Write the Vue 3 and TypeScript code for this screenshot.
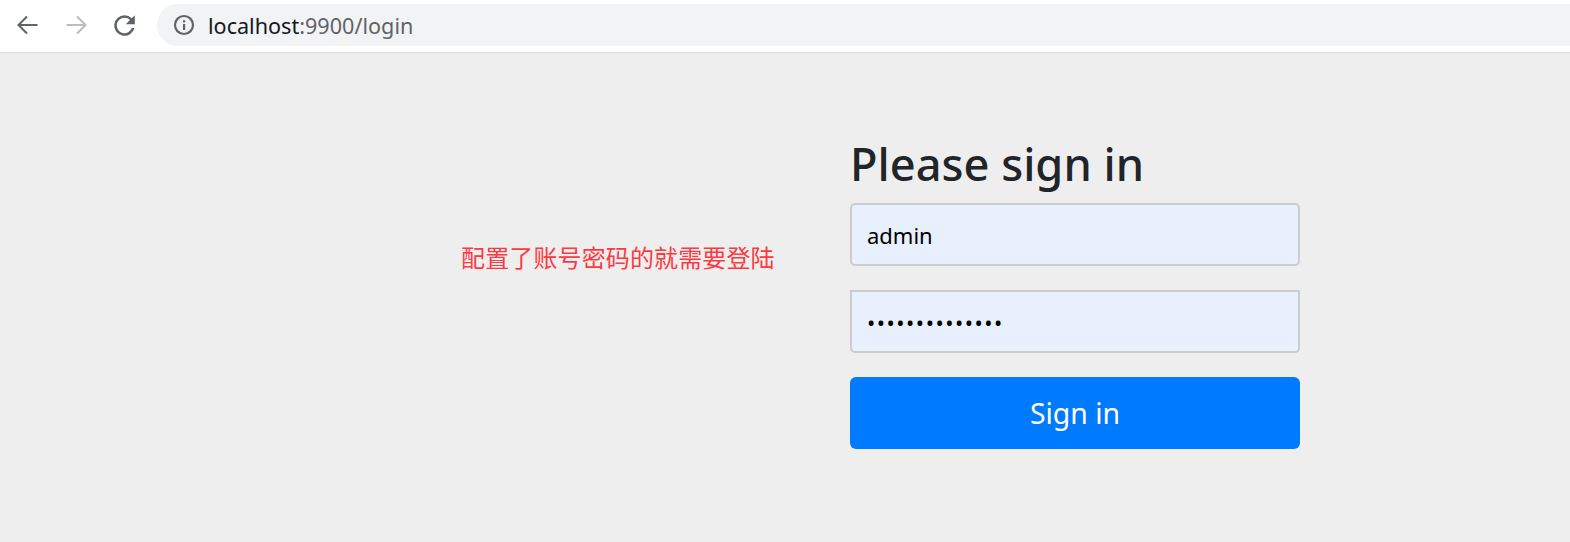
<script setup lang="ts">
const host = 'localhost'
const rest = ':9900/login'
const username = 'admin'
const password = 'admin123456789'
</script>

<template>
  <div class="browser">
    <header class="toolbar">
      <button class="nav">
        <svg width="24" height="24" viewBox="0 0 24 24"><path d="M21.5 12H3M11 3.5 2.5 12l8.5 8.5" fill="none" stroke="#5f6368" stroke-width="2" /></svg>
      </button>
      <button class="nav">
        <svg width="24" height="24" viewBox="0 0 24 24"><path d="M2.5 12H21M13 3.5l8.5 8.5-8.5 8.5" fill="none" stroke="#babcbe" stroke-width="2" /></svg>
      </button>
      <button class="nav reload">
        <svg width="31" height="31" viewBox="0 0 24 24"><path d="M17.65 6.35A7.96 7.96 0 0 0 12 4a8 8 0 1 0 7.73 10h-2.08A6 6 0 1 1 12 6c1.66 0 3.14.69 4.22 1.78L13 11h7V4z" fill="#5f6368" /></svg>
      </button>
      <div class="omnibox">
        <svg class="info" width="22" height="22" viewBox="0 0 22 22">
          <circle cx="11" cy="11" r="9" fill="none" stroke="#5f6368" stroke-width="2.2" />
          <rect x="10" y="10" width="2.2" height="6" fill="#5f6368" />
          <rect x="10" y="6.2" width="2.2" height="2.2" fill="#5f6368" />
        </svg>
        <span class="url"><span class="host">{{ host }}</span>{{ rest }}</span>
      </div>
    </header>

    <main class="page">
      <p class="note">配置了账号密码的就需要登陆</p>
      <form class="signin" @submit.prevent>
        <h1>Please sign in</h1>
        <input class="field first" type="text" :value="username" />
        <input class="field second" type="password" :value="password" />
        <button class="submit" type="submit">Sign in</button>
      </form>
    </main>
  </div>
</template>

<style>
html,
body {
  margin: 0;
  background: #eee;
}
</style>

<style scoped>
.browser {
  width: 1570px;
  height: 542px;
  overflow: hidden;
  font-family: "Noto Sans", "Noto Sans CJK SC", sans-serif;
}

.toolbar {
  box-sizing: border-box;
  height: 53px;
  background: #fff;
  border-bottom: 1px solid #dcdcdc;
  display: flex;
  align-items: flex-start;
  padding: 4px 0 0 5px;
}

.nav {
  width: 46px;
  height: 42px;
  padding: 0;
  border: 0;
  background: none;
  display: flex;
  align-items: center;
  justify-content: center;
  margin-right: 2px;
}

.nav svg {
  display: block;
}

.reload {
  margin-right: 10px;
}

.omnibox {
  flex: 1;
  height: 42px;
  background: #f1f3f4;
  border-radius: 21px 0 0 21px;
  display: flex;
  align-items: center;
  padding-left: 16px;
  gap: 13px;
}

.url {
  font-size: 21.6px;
  color: #5f6368;
}

.host {
  color: #16181b;
}

.page {
  height: 489px;
  background: #eee;
  display: flex;
  align-items: flex-start;
  padding-left: 461px;
}

.note {
  width: 389px;
  margin: 190px 0 0;
  color: #fb3a42;
  font-size: 24px;
  line-height: 30px;
  letter-spacing: 0.13px;
}

.signin {
  width: 450px;
  display: flex;
  flex-direction: column;
  padding-top: 78px;
}

h1 {
  margin: 0 0 7px;
  font-size: 45.2px;
  font-weight: 500;
  line-height: 65px;
  color: #212529;
}

.field {
  box-sizing: border-box;
  width: 450px;
  height: 63px;
  padding: 0 15px;
  border: 2px solid #ccc;
  background: #e8f0fe;
  color: #000;
  font: 22px "Noto Sans", sans-serif;
  outline: none;
}

.first {
  border-radius: 5px;
  margin-bottom: 24px;
}

.second {
  border-radius: 0 0 5px 5px;
  margin-bottom: 24px;
  letter-spacing: 1.5px;
}

.submit {
  height: 72px;
  border: 0;
  border-radius: 6px;
  background: #007bff;
  color: #fff;
  font: 28.4px "Noto Sans", sans-serif;
}
</style>
